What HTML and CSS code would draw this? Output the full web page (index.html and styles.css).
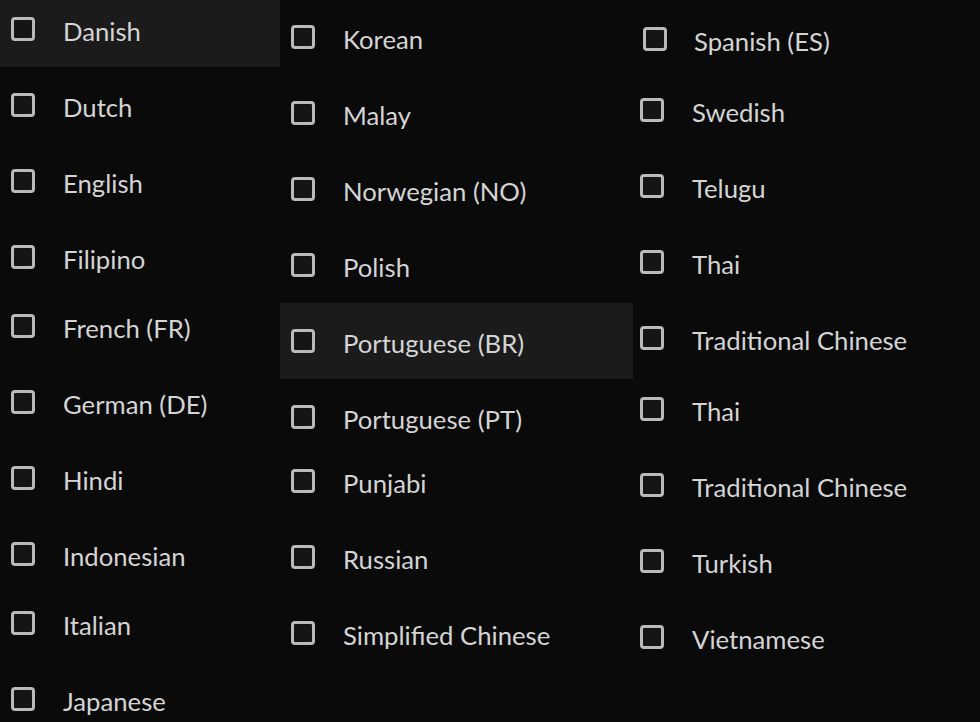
FILE: index.html
```html
<!DOCTYPE html>
<html lang="en">
<head>
    <meta charset="UTF-8">
    <title>Languages</title>
    <link rel="stylesheet" href="styles.css">
</head>
<body>
    <div class="lang-list">
        <div class="col col-a">
            <label class="row active"><span class="box"></span><span class="name">Danish</span></label>
            <label class="row"><span class="box"></span><span class="name">Dutch</span></label>
            <label class="row"><span class="box"></span><span class="name">English</span></label>
            <label class="row row-tuck"><span class="box"></span><span class="name">Filipino</span></label>
            <label class="row"><span class="box"></span><span class="name">French (FR)</span></label>
            <label class="row"><span class="box"></span><span class="name">German (DE)</span></label>
            <label class="row"><span class="box"></span><span class="name">Hindi</span></label>
            <label class="row row-tuck"><span class="box"></span><span class="name">Indonesian</span></label>
            <label class="row"><span class="box"></span><span class="name">Italian</span></label>
            <label class="row"><span class="box"></span><span class="name">Japanese</span></label>
        </div>

        <div class="col col-b">
            <label class="row"><span class="box"></span><span class="name">Korean</span></label>
            <label class="row"><span class="box"></span><span class="name">Malay</span></label>
            <label class="row"><span class="box"></span><span class="name">Norwegian (NO)</span></label>
            <label class="row"><span class="box"></span><span class="name">Polish</span></label>
            <label class="row active"><span class="box"></span><span class="name">Portuguese (BR)</span></label>
            <label class="row row-cut"><span class="box"></span><span class="name">Portuguese (PT)</span></label>
            <label class="row"><span class="box"></span><span class="name">Punjabi</span></label>
            <label class="row"><span class="box"></span><span class="name">Russian</span></label>
            <label class="row"><span class="box"></span><span class="name">Simplified Chinese</span></label>
        </div>

        <div class="col col-c">
            <label class="row row-tuck row-first"><span class="box"></span><span class="name">Spanish (ES)</span></label>
            <label class="row"><span class="box"></span><span class="name">Swedish</span></label>
            <label class="row"><span class="box"></span><span class="name">Telugu</span></label>
            <label class="row"><span class="box"></span><span class="name">Thai</span></label>
            <label class="row row-tuck"><span class="box"></span><span class="name">Traditional Chinese</span></label>
            <label class="row"><span class="box"></span><span class="name">Thai</span></label>
            <label class="row"><span class="box"></span><span class="name">Traditional Chinese</span></label>
            <label class="row"><span class="box"></span><span class="name">Turkish</span></label>
            <label class="row"><span class="box"></span><span class="name">Vietnamese</span></label>
        </div>
    </div>
</body>
</html>
```

FILE: styles.css
```css
html, body {
    height: 100%;
}

body {
    margin: 0;
    background-color: #0a0a0a;
    color: #d4d4d4;
    font-family: Lato, "Open Sans", Arial, sans-serif;
    font-size: 25.7px;
    overflow: hidden;
}

.lang-list {
    display: flex;
    height: 100%;
}

.col {
    display: flex;
    flex-direction: column;
}

.col-a {
    width: 280px;
    margin-top: -9px;
}

.col-b {
    width: 353px;
    margin-top: -1px;
}

.col-c {
    flex: 1;
    margin-top: 1px;
}

.row {
    display: flex;
    align-items: center;
    flex-shrink: 0;
    height: 76px;
    padding-left: 11px;
    cursor: pointer;
}

.col-c .row {
    padding-left: 7px;
}

.col-c .row-first {
    padding-left: 10px;
}

.row.active {
    background-color: #1b1b1b;
}

/* rows that sit a little closer to the next one */
.row-tuck {
    margin-bottom: -7px;
}

.col-c .row-tuck {
    margin-bottom: -5px;
}

.row-cut {
    margin-bottom: -12px;
}

.box {
    box-sizing: border-box;
    width: 24px;
    height: 24px;
    border: 3px solid #bababa;
    border-radius: 4px;
    background-color: #151515;
    flex-shrink: 0;
}

.name {
    margin-left: 28px;
    margin-top: 4px;
    white-space: nowrap;
}

.col-c .row-first .name {
    margin-left: 27px;
}
```
